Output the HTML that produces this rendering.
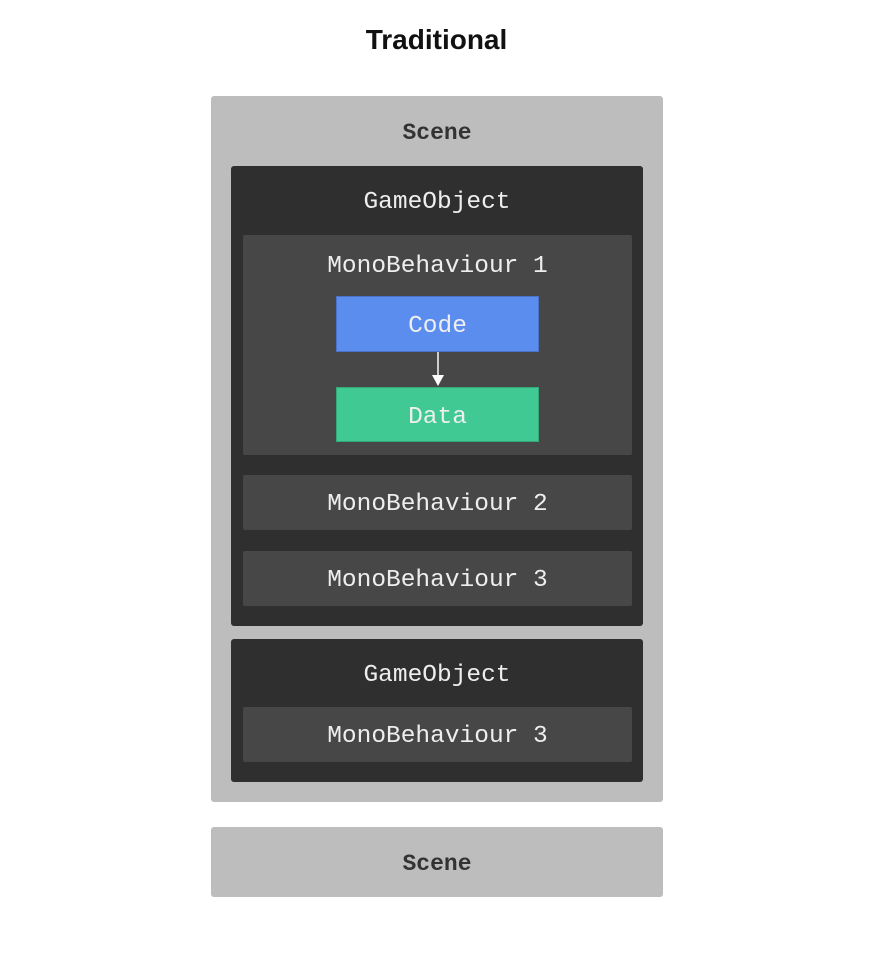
<!DOCTYPE html>
<html><head><style>
body{margin:0;width:873px;height:960px;background:#fff;position:relative;overflow:hidden}
div{position:absolute;box-sizing:border-box}
.m{font-family:"Liberation Mono","DejaVu Sans Mono",monospace;font-size:24.5px;color:#eee;text-align:center;left:0;right:0}
.s{background:#bdbdbd;border-radius:3px;left:211px;width:452px}
.g{background:#2f2f2f;border-radius:3px;left:20px;width:412px}
.b{background:#474747;border-radius:2px;left:12px;width:389px}
</style></head><body>
<div style="left:0;right:0;top:24px;text-align:center;font-family:'Liberation Sans',sans-serif;font-weight:bold;font-size:28px;color:#111">Traditional</div>
<div class="s" style="top:96px;height:706px">
 <div class="m" style="top:24px;font-weight:bold;color:#333;font-size:23px">Scene</div>
 <div class="g" style="top:70px;height:460px">
  <div class="m" style="top:23px">GameObject</div>
  <div class="b" style="top:69px;height:220px">
   <div class="m" style="top:18px">MonoBehaviour 1</div>
   <div style="left:93px;top:61px;width:203px;height:56px;background:#5b8def;border:1px solid #4a74c8"><div class="m" style="top:16px">Code</div></div>
   <div style="left:194px;top:117px;width:2px;height:25px;background:#ccc"></div>
   <div style="left:189px;top:140px;width:0;height:0;border-left:6px solid transparent;border-right:6px solid transparent;border-top:11px solid #fff"></div>
   <div style="left:93px;top:152px;width:203px;height:55px;background:#41c993;border:1px solid #35a87a"><div class="m" style="top:16px">Data</div></div>
  </div>
  <div class="b" style="top:309px;height:55px"><div class="m" style="top:16px">MonoBehaviour 2</div></div>
  <div class="b" style="top:385px;height:55px"><div class="m" style="top:16px">MonoBehaviour 3</div></div>
 </div>
 <div class="g" style="top:543px;height:143px">
  <div class="m" style="top:23px">GameObject</div>
  <div class="b" style="top:68px;height:55px"><div class="m" style="top:16px">MonoBehaviour 3</div></div>
 </div>
</div>
<div class="s" style="top:827px;height:70px">
 <div class="m" style="top:24px;font-weight:bold;color:#333;font-size:23px">Scene</div>
</div>
</body></html>
